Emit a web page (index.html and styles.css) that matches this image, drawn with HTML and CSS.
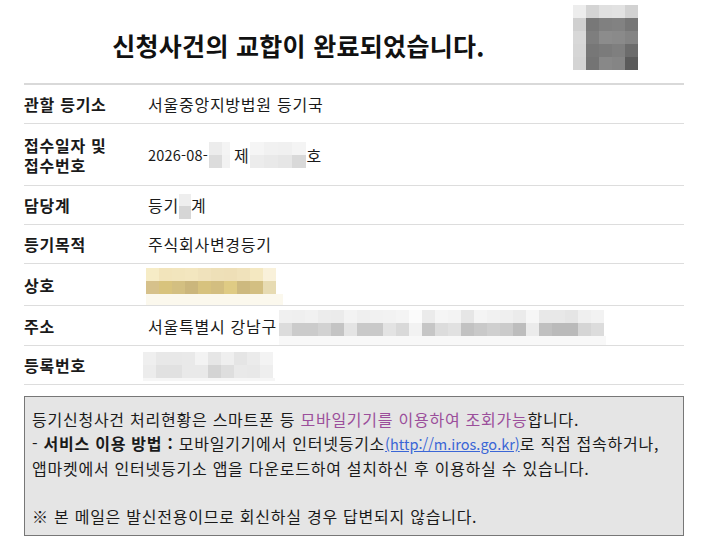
FILE: index.html
```html
<!DOCTYPE html>
<html lang="ko">
<head>
<meta charset="utf-8">
<title>교합 완료</title>
<link rel="stylesheet" href="styles.css">
</head>
<body>
<div class="page">
  <header class="head">
    <h1 class="title">신청사건의 교합이 완료되었습니다.</h1>
    <div class="logo">
      <i style="background:#ededed"></i><i style="background:#d4d4d4"></i><i style="background:#e0e0e0"></i><i style="background:#e2e2e2"></i><i style="background:#d2d2d2"></i>
      <i style="background:#d0d0d0"></i><i style="background:#787878"></i><i style="background:#808080"></i><i style="background:#828282"></i><i style="background:#777777"></i>
      <i style="background:#d8d8d8"></i><i style="background:#7e7e7e"></i><i style="background:#8c8c8c"></i><i style="background:#8a8a8a"></i><i style="background:#848484"></i>
      <i style="background:#d6d6d6"></i><i style="background:#777777"></i><i style="background:#7b7b7b"></i><i style="background:#7f7f7f"></i><i style="background:#6c6c6c"></i>
      <i style="background:#d4d4d4"></i><i style="background:#747474"></i><i style="background:#888888"></i><i style="background:#858585"></i><i style="background:#5b5b5b"></i>
    </div>
  </header>

  <div class="info">
    <div class="row">
      <div class="label">관할 등기소</div>
      <div class="value">서울중앙지방법원 등기국</div>
    </div>
    <div class="row row-tall">
      <div class="label">접수일자 및 접수번호</div>
      <div class="value"><span class="num">2026-08-</span><span class="blur blur-day"><i style="background:#ececec"></i><i style="background:#f4f4f4"></i><i style="background:#dcdcdc"></i><i style="background:#f2f2f2"></i></span><span class="gap">제</span><span class="blur blur-no"><i style="background:#f5f5f5"></i><i style="background:#f1f1f1"></i><i style="background:#f0f0f0"></i><i style="background:#f4f4f4"></i><i style="background:#ececec"></i><i style="background:#e9e9e9"></i><i style="background:#e6e6e6"></i><i style="background:#d9d9d9"></i></span>호</div>
    </div>
    <div class="row">
      <div class="label">담당계</div>
      <div class="value">등기<span class="blur blur-team"><i style="background:#eeeeee"></i><i style="background:#d6d6d6"></i></span>계</div>
    </div>
    <div class="row">
      <div class="label">등기목적</div>
      <div class="value">주식회사변경등기</div>
    </div>
    <div class="row row-name">
      <div class="label">상호</div>
      <div class="value"><span class="blur blur-name">
        <i style="background:#f6ecc6"></i><i style="background:#f2e4bb"></i><i style="background:#f2e5bd"></i><i style="background:#f3e6bf"></i><i style="background:#f0e2bc"></i><i style="background:#eee0b8"></i><i style="background:#eedfb7"></i><i style="background:#f0e2bb"></i><i style="background:#f4e8c1"></i><i style="background:#f9f1da"></i>
        <i style="background:#d6c18b"></i><i style="background:#d8c37d"></i><i style="background:#d3bf81"></i><i style="background:#cbb67c"></i><i style="background:#d7c27e"></i><i style="background:#d3be80"></i><i style="background:#dfcb84"></i><i style="background:#cdb97f"></i><i style="background:#d3bf82"></i><i style="background:#e7dbb2"></i>
        <b class="fade fade-warm"></b>
      </span></div>
    </div>
    <div class="row row-addr">
      <div class="label">주소</div>
      <div class="value">서울특별시 강남구<span class="blur blur-addr">
        <i style="background:#f0f0f0"></i><i style="background:#efefef"></i><i style="background:#f1f1f1"></i><i style="background:#ececec"></i><i style="background:#ebebeb"></i><i style="background:#f3f3f3"></i><i style="background:#efefef"></i><i style="background:#f1f1f1"></i><i style="background:#f2f2f2"></i><i style="background:#f4f4f4"></i><i style="background:#fbfbfb"></i><i style="background:#ebebeb"></i><i style="background:#f5f5f5"></i><i style="background:#f3f3f3"></i><i style="background:#e6e6e6"></i><i style="background:#f4f4f4"></i><i style="background:#f1f1f1"></i><i style="background:#efefef"></i><i style="background:#ebebeb"></i><i style="background:#f6f6f6"></i><i style="background:#e8e8e8"></i><i style="background:#e8e8e8"></i><i style="background:#e5e5e5"></i><i style="background:#efefef"></i><i style="background:#f2f2f2"></i>
        <i style="background:#dcdcdc"></i><i style="background:#cbcbcb"></i><i style="background:#cbcbcb"></i><i style="background:#d2d2d2"></i><i style="background:#c4c4c4"></i><i style="background:#e4e4e4"></i><i style="background:#c9c9c9"></i><i style="background:#c9c9c9"></i><i style="background:#e3e3e3"></i><i style="background:#d9d9d9"></i><i style="background:#f2f2f2"></i><i style="background:#c6c6c6"></i><i style="background:#dcdcdc"></i><i style="background:#e1e1e1"></i><i style="background:#c2c2c2"></i><i style="background:#c9c9c9"></i><i style="background:#cfcfcf"></i><i style="background:#cbcbcb"></i><i style="background:#bdbdbd"></i><i style="background:#ebebeb"></i><i style="background:#c0c0c0"></i><i style="background:#bababa"></i><i style="background:#bababa"></i><i style="background:#d5d5d5"></i><i style="background:#dcdcdc"></i>
        <b class="fade"></b>
      </span></div>
    </div>
    <div class="row">
      <div class="label">등록번호</div>
      <div class="value"><span class="blur blur-reg">
        <i style="background:#efefef"></i><i style="background:#e8e8e8"></i><i style="background:#e8e8e8"></i><i style="background:#e9e9e9"></i><i style="background:#f3f3f3"></i><i style="background:#e6e6e6"></i><i style="background:#efefef"></i><i style="background:#e5e5e5"></i><i style="background:#ebebeb"></i><i style="background:#f3f3f3"></i>
        <i style="background:#ececec"></i><i style="background:#e1e1e1"></i><i style="background:#e1e1e1"></i><i style="background:#e9e9e9"></i><i style="background:#e9e9e9"></i><i style="background:#d4d4d4"></i><i style="background:#dedede"></i><i style="background:#e9e9e9"></i><i style="background:#e8e8e8"></i><i style="background:#eeeeee"></i>
        <b class="fade fade-short"></b>
      </span></div>
    </div>
  </div>

  <div class="notice">
    <p>등기신청사건 처리현황은 스마트폰 등 <span class="purple">모바일기기를 이용하여 조회가능</span>합니다.</p>
    <p>- <strong>서비스 이용 방법 :</strong> 모바일기기에서 인터넷등기소<a class="link" href="#">(http://m.iros.go.kr)</a>로 직접 접속하거나,</p>
    <p>앱마켓에서 인터넷등기소 앱을 다운로드하여 설치하신 후 이용하실 수 있습니다.</p>
    <p class="blank">&nbsp;</p>
    <p>※ 본 메일은 발신전용이므로 회신하실 경우 답변되지 않습니다.</p>
  </div>
</div>
</body>
</html>
```

FILE: styles.css
```css
html, body {
  margin: 0;
  padding: 0;
  background: #ffffff;
}

body {
  font-family: "Noto Sans CJK KR", "Noto Sans", sans-serif;
  font-size: 16px;
  letter-spacing: 0.75px;
  color: #1a1a1a;
}

.page {
  margin: 0 26px 0 24px;
}

.head {
  display: flex;
  align-items: flex-start;
  height: 83px;
  border-bottom: 2px solid #d9d9d9;
}

.title {
  flex: 1;
  margin: 30px 0 0;
  text-align: center;
  font-size: 25px;
  line-height: 30px;
  font-weight: 700;
  letter-spacing: 0.3px;
  color: #111111;
}

.logo {
  display: grid;
  grid-template-columns: repeat(5, 13px);
  grid-auto-rows: 13px;
  margin: 5px 46px 0 0;
}

.logo i,
.blur i {
  display: block;
}

.info {
  display: flex;
  flex-direction: column;
}

.row {
  display: flex;
  align-items: center;
  min-height: 39px;
  box-sizing: border-box;
  border-bottom: 1px solid #dddddd;
  line-height: 20px;
}

.row-tall {
  min-height: 62px;
}

.row-name {
  min-height: 42px;
}

.row-addr {
  min-height: 40px;
}

.label {
  width: 124px;
  flex: none;
  font-weight: 700;
  padding-right: 8px;
  box-sizing: border-box;
  word-break: keep-all;
}

.value {
  display: flex;
  align-items: center;
  flex: 1;
  white-space: nowrap;
}

.num {
  font-size: 14.5px;
  letter-spacing: 0.2px;
}

.gap {
  margin-left: 4px;
}

.blur {
  display: inline-grid;
  flex: none;
}

.blur-day {
  grid-template-columns: 13px 8px;
  grid-template-rows: 13px 13px;
  margin-left: 1px;
}

.blur-no {
  grid-template-columns: 14px 14px 14px 14px;
  grid-template-rows: 13px 13px;
  margin-left: 1px;
}

.blur-team {
  grid-template-columns: 12px;
  grid-template-rows: 12px 13px;
  margin-left: 0;
  margin-top: 3px;
}

.blur-name {
  grid-template-columns: repeat(10, 13px);
  grid-template-rows: 13px 13px 11px;
  margin-left: -2px;
  margin-top: 3px;
}

.blur-addr {
  grid-template-columns: repeat(25, 13px);
  grid-template-rows: 13px 13px 9px;
  margin-left: 2px;
  margin-top: 4px;
}

.blur-reg {
  grid-template-columns: repeat(10, 13px);
  grid-template-rows: 13px 13px 3px;
  margin-left: -5px;
  margin-top: 3px;
}

.fade {
  display: block;
  grid-column: 1 / -1;
  margin-right: -2px;
  background: #f8f8f8;
}

.fade-warm {
  margin-right: -7px;
  background: #fbf8ed;
}

.fade-short {
  background: #f6f6f6;
}

.notice {
  margin-top: 11px;
  padding: 10px 7px 7px;
  background: #e5e5e5;
  border: 1px solid #777777;
  line-height: 24px;
  color: #1a1a1a;
}

.notice p {
  margin: 0;
  white-space: nowrap;
}

.notice strong {
  font-weight: 700;
}

.purple {
  color: #9b4f9b;
}

.link {
  color: #3a66d6;
  text-decoration: underline;
  letter-spacing: 0;
  font-size: 14.5px;
}
```
